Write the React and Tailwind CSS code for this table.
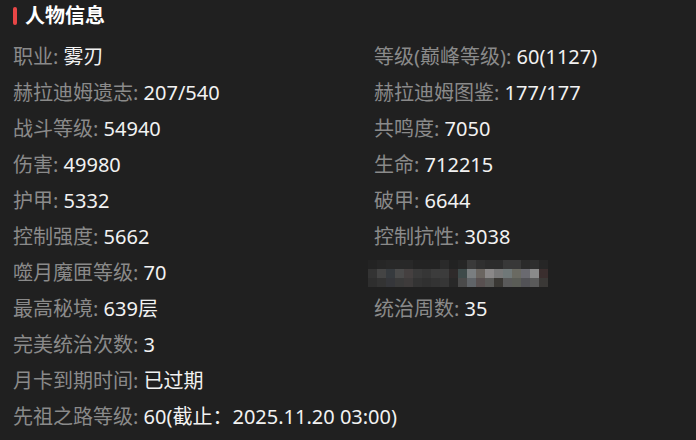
import React from "react";

const rows = [
  [["职业", "雾刃"], ["等级(巅峰等级)", "60(1127)"]],
  [["赫拉迪姆遗志", "207/540"], ["赫拉迪姆图鉴", "177/177"]],
  [["战斗等级", "54940"], ["共鸣度", "7050"]],
  [["伤害", "49980"], ["生命", "712215"]],
  [["护甲", "5332"], ["破甲", "6644"]],
  [["控制强度", "5662"], ["控制抗性", "3038"]],
  [["噬月魔匣等级", "70"], null],
  [["最高秘境", "639层"], ["统治周数", "35"]],
  [["完美统治次数", "3"]],
  [["月卡到期时间", "已过期"]],
  [["先祖之路等级", "60(截止：2025.11.20 03:00)"]],
];

// pixelated mosaic cells (3 rows x 20 cols)
const mosaic = [
  ["#232323", "#262626", "#282828", "#282828", "#282828", "#232323", "#232323", "#232323", "#2a2a2a", "#222222", "#262626", "#3a3a3a", "#303030", "#2c2c2c", "#2c2c2c", "#383838", "#383838", "#2a2a2a", "#2e2e2e", "#262626"],
  ["#333333", "#444444", "#363a3e", "#4a4a4a", "#454040", "#3a3a3a", "#363636", "#3c3c3c", "#3c3c3c", "#2e2a2a", "#3e4a4a", "#7a7e80", "#6a6560", "#8a8888", "#787878", "#707878", "#6a6a62", "#6a6a70", "#8a8a8a", "#3a2e2e"],
  ["#2e2e2e", "#333333", "#35363a", "#3a3a3a", "#3e3b3b", "#333333", "#303030", "#333333", "#363636", "#282828", "#4a4a4a", "#606468", "#585050", "#5a5a58", "#3a3834", "#5a5a5a", "#5a5c56", "#525256", "#5a5a5a", "#3a3836"],
];

const Field = ({ item }) => (
  <div className="text-[20px] leading-[36px] whitespace-nowrap">
    <span className="text-[#8a8a8a]">{item[0]}: </span>
    <span className="text-[#f2f2f2]">{item[1]}</span>
  </div>
);

const Mosaic = () => (
  <div className="flex items-center h-[36px]">
    <div className="flex flex-col -ml-[6px]">
      {mosaic.map((line, r) => (
        <div key={r} className="flex">
          {line.map((c, i) => (
            <div key={i} className="w-[9px] h-[9px]" style={{ backgroundColor: c }} />
          ))}
        </div>
      ))}
    </div>
  </div>
);

export default function App() {
  return (
    <div
      className="w-[696px] h-[440px] bg-[#202020] overflow-hidden"
      style={{ fontFamily: '"Noto Sans", "Noto Sans CJK SC", sans-serif' }}
    >
      {/* Header */}
      <div className="flex items-center h-[32px] pl-[13px] gap-[8px]">
        <div className="w-[4px] h-[18px] bg-[#e84646] rounded-[2px]" />
        <h2 className="text-[20px] font-bold text-white">人物信息</h2>
      </div>

      {/* Info rows */}
      <div className="mt-[7px] pl-[13px]">
        {rows.map((row, idx) => (
          <div key={idx} className="flex">
            <div className="w-[361px]">
              <Field item={row[0]} />
            </div>
            {row.length > 1 && (
              <div>{row[1] ? <Field item={row[1]} /> : <Mosaic />}</div>
            )}
          </div>
        ))}
      </div>
    </div>
  );
}
